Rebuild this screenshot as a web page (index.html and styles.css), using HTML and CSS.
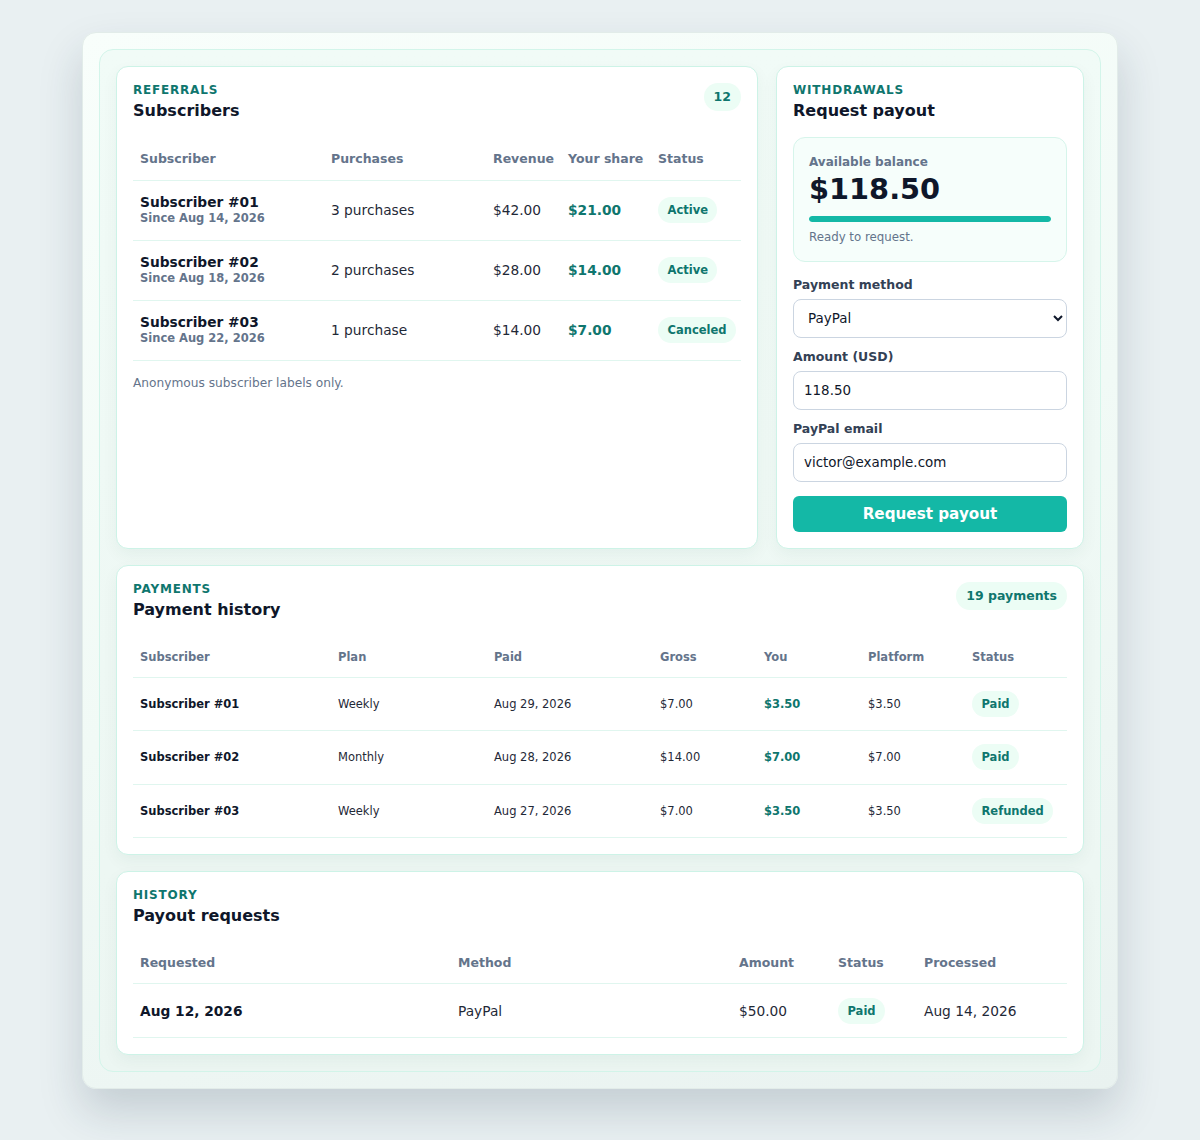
FILE: index.html
```html
<!DOCTYPE html>
<html lang="en">
<head>
<meta charset="utf-8">
<title>Referrals dashboard</title>
<link rel="stylesheet" href="styles.css">
</head>
<body>
<div class="shell">
  <div class="panel">
    <div class="top-grid">
      <section class="card">
        <div class="card-head">
          <div>
            <div class="eyebrow">Referrals</div>
            <h2 class="title">Subscribers</h2>
          </div>
          <span class="pill pill-count">12</span>
        </div>
        <table class="tbl tbl-ref">
          <colgroup>
            <col style="width:191px"><col style="width:162px"><col style="width:75px"><col style="width:90px"><col>
          </colgroup>
          <thead>
            <tr><th>Subscriber</th><th>Purchases</th><th>Revenue</th><th>Your share</th><th>Status</th></tr>
          </thead>
          <tbody>
            <tr>
              <td><div class="sub-name">Subscriber #01</div><div class="sub-since">Since Aug 14, 2026</div></td>
              <td>3 purchases</td><td>$42.00</td><td class="green">$21.00</td><td><span class="pill">Active</span></td>
            </tr>
            <tr>
              <td><div class="sub-name">Subscriber #02</div><div class="sub-since">Since Aug 18, 2026</div></td>
              <td>2 purchases</td><td>$28.00</td><td class="green">$14.00</td><td><span class="pill">Active</span></td>
            </tr>
            <tr>
              <td><div class="sub-name">Subscriber #03</div><div class="sub-since">Since Aug 22, 2026</div></td>
              <td>1 purchase</td><td>$14.00</td><td class="green">$7.00</td><td><span class="pill">Canceled</span></td>
            </tr>
          </tbody>
        </table>
        <p class="note">Anonymous subscriber labels only.</p>
      </section>

      <section class="card">
        <div class="eyebrow">Withdrawals</div>
        <h2 class="title">Request payout</h2>
        <div class="balance">
          <div class="balance-label">Available balance</div>
          <div class="balance-amount">$118.50</div>
          <div class="bar"><div class="bar-fill" style="width:100%"></div></div>
          <div class="balance-note">Ready to request.</div>
        </div>
        <form class="form">
          <label class="lbl" for="method">Payment method</label>
          <select id="method" class="field select"><option>PayPal</option><option>Bank transfer</option></select>
          <label class="lbl" for="amount">Amount (USD)</label>
          <input id="amount" class="field" type="text" value="118.50">
          <label class="lbl" for="email">PayPal email</label>
          <input id="email" class="field" type="text" value="victor@example.com">
          <button type="button" class="btn">Request payout</button>
        </form>
      </section>
    </div>

    <section class="card">
      <div class="card-head">
        <div>
          <div class="eyebrow">Payments</div>
          <h2 class="title">Payment history</h2>
        </div>
        <span class="pill pill-count">19 payments</span>
      </div>
      <table class="tbl tbl-pay">
        <colgroup>
          <col style="width:198px"><col style="width:156px"><col style="width:166px"><col style="width:104px"><col style="width:104px"><col style="width:104px"><col>
        </colgroup>
        <thead>
          <tr><th>Subscriber</th><th>Plan</th><th>Paid</th><th>Gross</th><th>You</th><th>Platform</th><th>Status</th></tr>
        </thead>
        <tbody>
          <tr><td class="bold">Subscriber #01</td><td>Weekly</td><td>Aug 29, 2026</td><td>$7.00</td><td class="green">$3.50</td><td>$3.50</td><td><span class="pill">Paid</span></td></tr>
          <tr><td class="bold">Subscriber #02</td><td>Monthly</td><td>Aug 28, 2026</td><td>$14.00</td><td class="green">$7.00</td><td>$7.00</td><td><span class="pill">Paid</span></td></tr>
          <tr><td class="bold">Subscriber #03</td><td>Weekly</td><td>Aug 27, 2026</td><td>$7.00</td><td class="green">$3.50</td><td>$3.50</td><td><span class="pill">Refunded</span></td></tr>
        </tbody>
      </table>
    </section>

    <section class="card">
      <div class="eyebrow">History</div>
      <h2 class="title">Payout requests</h2>
      <table class="tbl tbl-hist">
        <colgroup>
          <col style="width:318px"><col style="width:281px"><col style="width:99px"><col style="width:86px"><col>
        </colgroup>
        <thead>
          <tr><th>Requested</th><th>Method</th><th>Amount</th><th>Status</th><th>Processed</th></tr>
        </thead>
        <tbody>
          <tr><td class="bold">Aug 12, 2026</td><td>PayPal</td><td>$50.00</td><td><span class="pill">Paid</span></td><td>Aug 14, 2026</td></tr>
        </tbody>
      </table>
    </section>
  </div>
</div>
</body>
</html>
```

FILE: styles.css
```css
* { box-sizing: border-box; }

html, body {
  margin: 0;
  padding: 0;
}

body {
  background: #e9f0f2;
  font-family: "DejaVu Sans", "Liberation Sans", sans-serif;
  color: #1f2937;
  padding: 32px 0 51px;
}

.shell {
  width: 1036px;
  margin: 0 auto;
  padding: 16px;
  border: 1px solid #e2ece9;
  border-radius: 14px;
  background: linear-gradient(160deg, #f8fefb 0%, #f1faf6 50%, #e9f2f0 100%);
  box-shadow: 0 22px 44px rgba(30, 50, 70, 0.18);
}

.panel {
  padding: 16px;
  border: 1px solid #d3f5ea;
  border-radius: 14px;
  background: linear-gradient(180deg, #f1fbf7 0%, #ecf6f2 100%);
  display: flex;
  flex-direction: column;
  gap: 16px;
}

.top-grid {
  display: grid;
  grid-template-columns: minmax(0, 1fr) 308px;
  gap: 18px;
  align-items: stretch;
}

.card {
  background: #ffffff;
  border: 1px solid #cdf3e7;
  border-radius: 12px;
  padding: 16px;
  box-shadow: 0 6px 16px rgba(20, 80, 60, 0.05);
}

.card-head {
  display: flex;
  justify-content: space-between;
  align-items: flex-start;
}

.eyebrow {
  font-size: 12px;
  line-height: 15px;
  font-weight: 700;
  letter-spacing: 0.8px;
  text-transform: uppercase;
  color: #0f766e;
}

.title {
  margin: 3px 0 0;
  font-size: 16px;
  line-height: 20px;
  font-weight: 700;
  color: #0f172a;
}

.pill {
  display: inline-block;
  padding: 0 9.5px;
  height: 26px;
  line-height: 26px;
  border-radius: 13px;
  background: #ecfdf5;
  color: #0f766e;
  font-size: 11.5px;
  font-weight: 700;
  white-space: nowrap;
}

.pill-count {
  height: 28px;
  line-height: 28px;
  border-radius: 14px;
  padding: 0 10px;
  font-size: 12.5px;
}

.tbl {
  width: 100%;
  border-collapse: collapse;
  table-layout: fixed;
  margin-top: 17px;
}

.tbl th {
  text-align: left;
  font-weight: 700;
  color: #64748b;
  padding: 0 7px;
  border-bottom: 1px solid #e0f6ef;
  white-space: nowrap;
}

.tbl td {
  padding: 0 7px;
  border-bottom: 1px solid #e0f6ef;
  vertical-align: middle;
  white-space: nowrap;
  color: #1f2937;
}

.tbl-ref th { font-size: 12.5px; height: 42px; }
.tbl-ref td { font-size: 13.75px; height: 60px; }

.tbl-pay th { font-size: 11.5px; height: 40px; }
.tbl-pay td { font-size: 11.5px; height: 53px; }
.tbl-pay tr:nth-child(2) td { height: 54px; }

.tbl-hist th { font-size: 12.5px; height: 41px; }
.tbl-hist td { font-size: 13.75px; height: 54px; }

.sub-name {
  font-size: 13.75px;
  line-height: 17px;
  font-weight: 700;
  color: #0f172a;
}

.sub-since {
  font-size: 11.5px;
  line-height: 15px;
  font-weight: 700;
  color: #64748b;
}

.bold {
  font-weight: 700;
  color: #0f172a !important;
}

.green {
  font-weight: 700;
  color: #0f766e !important;
}

.note {
  margin: 15px 0 0;
  font-size: 12.2px;
  line-height: 15px;
  color: #64748b;
}

.balance {
  margin-top: 16px;
  padding: 16px 15px 16px;
  border: 1px solid #d6f5eb;
  border-radius: 12px;
  background: #f6fefb;
}

.balance-label {
  font-size: 12px;
  line-height: 16px;
  font-weight: 700;
  color: #64748b;
}

.balance-amount {
  margin-top: 2px;
  font-size: 28.8px;
  line-height: 34px;
  font-weight: 700;
  color: #0f172a;
}

.bar {
  margin-top: 10px;
  height: 6px;
  border-radius: 3px;
  background: #d1f3ea;
  overflow: hidden;
}

.bar-fill {
  height: 100%;
  background: #14b8a6;
  border-radius: 3px;
}

.balance-note {
  margin-top: 8px;
  font-size: 11.8px;
  line-height: 15px;
  color: #64748b;
}

.form {
  display: flex;
  flex-direction: column;
  margin: 0;
}

.lbl {
  margin-top: 11px;
  font-size: 12.5px;
  line-height: 16px;
  font-weight: 700;
  color: #334155;
}

.lbl:first-child { margin-top: 15px; }

.field {
  margin-top: 6px;
  height: 39px;
  width: 100%;
  padding: 0 10px;
  border: 1px solid #cbd5e1;
  border-radius: 8px;
  background: #ffffff;
  font-family: inherit;
  font-size: 13.44px;
  color: #0f172a;
}

.select {
  padding: 0 6px 0 10px;
}

.btn {
  margin-top: 14px;
  height: 36px;
  border: 0;
  border-radius: 6px;
  background: #14b8a6;
  color: #ffffff;
  font-family: inherit;
  font-size: 15.2px;
  font-weight: 700;
  cursor: pointer;
}
```
